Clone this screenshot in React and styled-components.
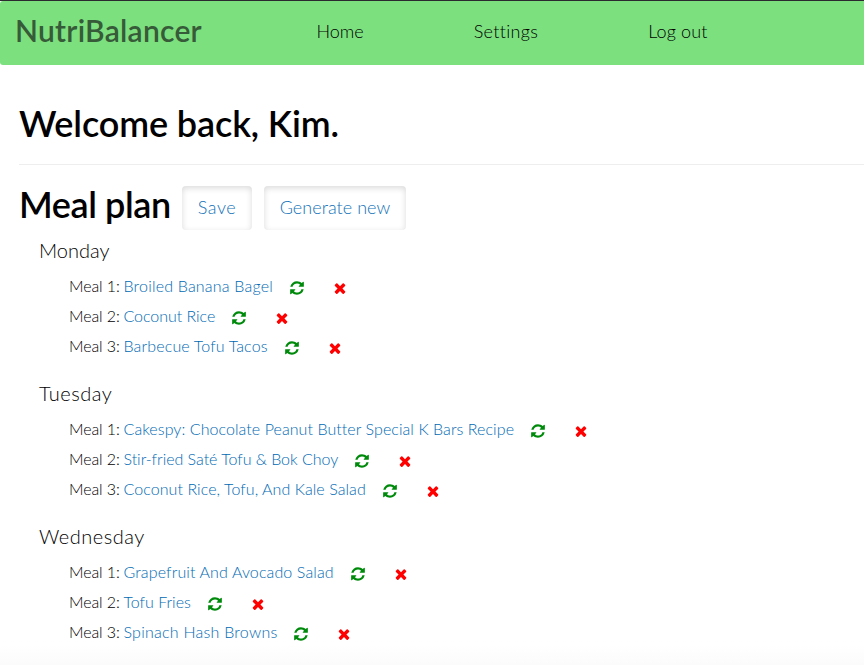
import React from 'react';
import styled, { createGlobalStyle } from 'styled-components';

const GlobalStyle = createGlobalStyle`
  *, *::before, *::after { box-sizing: border-box; }
  body {
    margin: 0;
    background: #fff;
    color: #000;
    font-family: Lato, "Open Sans", sans-serif;
    font-weight: 300;
    font-variant-ligatures: none;
    overflow: hidden;
  }
`;

const Page = styled.div`
  height: 665px;
  overflow: hidden;
  background: linear-gradient(#fff 645px, #fbfbfb 665px);
`;

const TopEdge = styled.div`
  height: 5px;
  margin-bottom: -4px;
  background: linear-gradient(#2b2b2f 1px, #fff 1px);
`;

const Navbar = styled.nav`
  position: relative;
  display: flex;
  height: 64px;
  padding-left: 15px;
  background: #7ce07f;
  border-radius: 3px 0 0 3px;
`;

const Brand = styled.a`
  width: 301.5px;
  font-size: 30px;
  font-weight: 600;
  line-height: 58px;
  letter-spacing: 0.26px;
  color: #375a38;
`;

const NavLinks = styled.div`
  display: flex;
  gap: 110px;
`;

const NavLink = styled.a`
  font-size: 18px;
  line-height: 60px;
  letter-spacing: ${(p) => p.$track || 0}px;
`;

const Content = styled.main`
  padding-left: 19px;
`;

const Title = styled.h1`
  margin: 0;
  height: 100px;
  padding-top: 37px;
  border-bottom: 1px solid #eee;
  font-size: 36px;
  font-weight: 600;
  line-height: 42px;
  letter-spacing: -0.12px;
  white-space: pre;
`;

const PlanHeader = styled.header`
  display: flex;
  align-items: flex-start;
  padding-top: 21px;
  height: 71px;
`;

const PlanTitle = styled.h2`
  width: 163px;
  margin: 0;
  font-size: 36px;
  font-weight: 600;
  line-height: 36px;
  letter-spacing: -0.4px;
`;

const Button = styled.button`
  width: ${(p) => p.$width}px;
  height: 44px;
  margin-right: 12px;
  padding: 0 0 2px;
  border: 0;
  border-radius: 4px;
  background: #fff;
  box-shadow: inset 0 2px 6px rgba(0, 0, 0, 0.15);
  color: #1272b8;
  font: inherit;
  font-size: 18px;
  letter-spacing: ${(p) => p.$track}px;
`;

const Day = styled.section`
  height: 143px;
  padding-left: 20px;
`;

const DayName = styled.h3`
  margin: 0;
  height: 35px;
  font-size: 20px;
  font-weight: 300;
  line-height: 28px;
  letter-spacing: ${(p) => p.$track}px;
`;

const Meals = styled.ul`
  margin: 0;
  padding: 0 0 0 30px;
  list-style: none;
`;

const Meal = styled.li`
  display: flex;
  height: 30px;
  font-size: 16px;
  line-height: 30px;
  white-space: nowrap;
`;

const Label = styled.span`
  width: 54.5px;
  letter-spacing: -0.1px;
`;

const Recipe = styled.a`
  width: ${(p) => p.$width}px;
  color: #006ab4;
  letter-spacing: ${(p) => p.$track}px;
`;

const Icon = styled.svg`
  width: 16px;
  height: 16px;
  margin-top: 9px;
  fill: ${(p) => p.$color};
`;

const Refresh = styled(Icon)`
  margin-left: 16px;
  margin-right: 27px;
`;

const REFRESH =
  'M1639 1056q0 5-1 7-64 268-268 434.5t-478 166.5q-146 0-282.5-55t-243.5-157l-129 129q-19 19-45 19t-45-19-19-45v-448q0-26 19-45t45-19h448q26 0 45 19t19 45-19 45l-137 137q71 66 161 102t187 36q134 0 250-65t186-179q11-17 53-117 8-23 30-23h192q13 0 22.5 9.5t9.5 22.5zm25-800v448q0 26-19 45t-45 19h-448q-26 0-45-19t-19-45 19-45l138-138q-148-137-349-137-134 0-250 65t-186 179q-11 17-53 117-8 23-30 23h-199q-13 0-22.5-9.5t-9.5-22.5v-7q65-268 270-434.5t480-166.5q146 0 284 55.5t245 156.5l130-129q19-19 45-19t45 19 19 45z';
const REMOVE =
  'M1490 1322q0 40-28 68l-136 136q-28 28-68 28t-68-28l-294-294-294 294q-28 28-68 28t-68-28l-136-136q-28-28-28-68t28-68l294-294-294-294q-28-28-28-68t28-68l136-136q28-28 68-28t68 28l294 294 294-294q28-28 68-28t68 28l136 136q28 28 28 68t-28 68l-294 294 294 294q28 28 28 68z';

const plan = [
  {
    day: 'Monday',
    track: 0,
    meals: [
      ['Broiled Banana Bagel', 149.6, 0.2],
      ['Coconut Rice', 91.6, -0.04],
      ['Barbecue Tofu Tacos', 144.6, 0.14],
    ],
  },
  {
    day: 'Tuesday',
    track: 0.5,
    meals: [
      ['Cakespy: Chocolate Peanut Butter Special K Bars Recipe', 390.6, 0.07],
      ['Stir-fried Saté Tofu & Bok Choy', 214.6, -0.03],
      ['Coconut Rice, Tofu, And Kale Salad', 242.6, 0.07],
    ],
  },
  {
    day: 'Wednesday',
    track: 0.5,
    meals: [
      ['Grapefruit And Avocado Salad', 210.2, 0.12],
      ['Tofu Fries', 67.3, 0],
      ['Spinach Hash Browns', 153.7, 0.25],
    ],
  },
];

export default function App() {
  return (
    <Page>
      <GlobalStyle />
      <TopEdge />
      <Navbar>
        <Brand>NutriBalancer</Brand>
        <NavLinks>
          <NavLink>Home</NavLink>
          <NavLink $track={0.32}>Settings</NavLink>
          <NavLink $track={0.1}>Log out</NavLink>
        </NavLinks>
      </Navbar>
      <Content>
        <Title>Welcome back, Kim.</Title>
        <PlanHeader>
          <PlanTitle>Meal plan</PlanTitle>
          <Button $width={70} $track={0.6}>Save</Button>
          <Button $width={142} $track={0.05}>Generate new</Button>
        </PlanHeader>
        {plan.map(({ day, track, meals }) => (
          <Day key={day}>
            <DayName $track={track}>{day}</DayName>
            <Meals>
              {meals.map(([name, width, spacing], i) => (
                <Meal key={name}>
                  <Label>Meal {i + 1}:</Label>
                  <Recipe $width={width} $track={spacing}>{name}</Recipe>
                  <Refresh viewBox="0 0 1792 1792" $color="#008a0c">
                    <path d={REFRESH} />
                  </Refresh>
                  <Icon viewBox="0 0 1792 1792" $color="#f00">
                    <path d={REMOVE} />
                  </Icon>
                </Meal>
              ))}
            </Meals>
          </Day>
        ))}
      </Content>
    </Page>
  );
}
